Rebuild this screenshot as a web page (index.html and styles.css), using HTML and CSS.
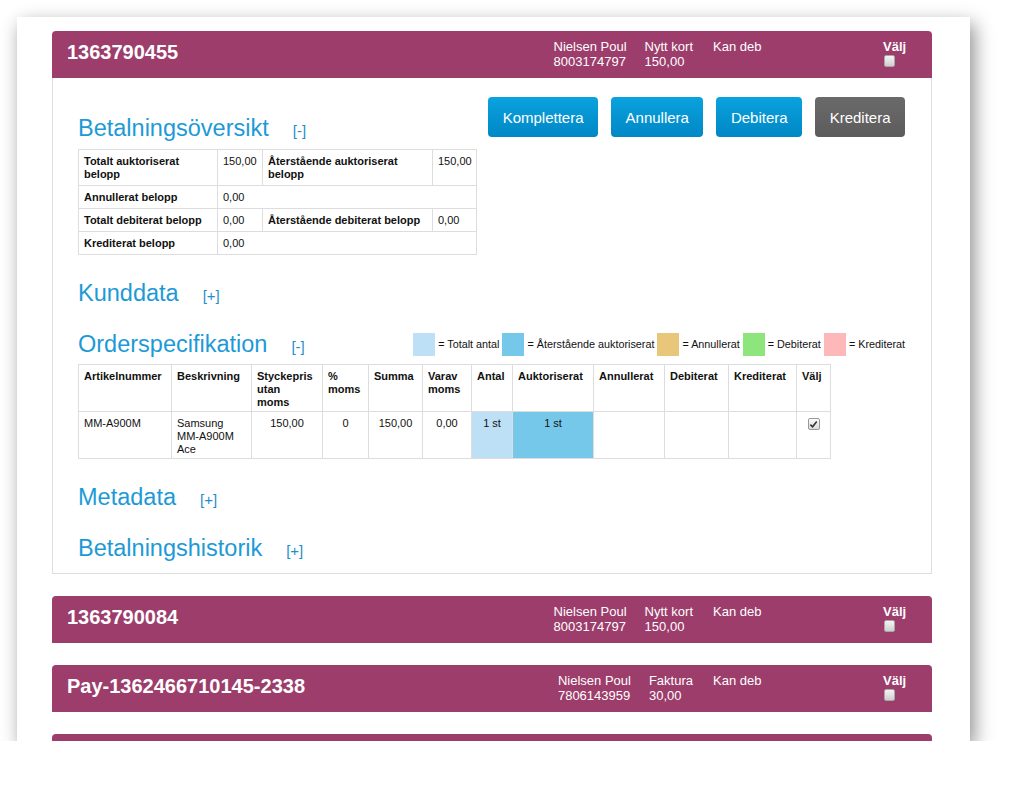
FILE: index.html
```html
<!DOCTYPE html>
<html lang="sv">
<head>
<meta charset="utf-8">
<title>Betalningar</title>
<link rel="stylesheet" href="styles.css">
</head>
<body>
<div class="frame">

  <div class="panel">
    <div class="panel-head">
      <div class="order-id">1363790455</div>
      <div class="info info-name"><div>Nielsen Poul</div><div>8003174797</div></div>
      <div class="info"><div>Nytt kort</div><div>150,00</div></div>
      <div class="status">Kan deb</div>
      <div class="select"><div class="select-label">Välj</div><span class="cb"></span></div>
    </div>
    <div class="panel-body">
      <section class="section">
        <div class="row row-top">
          <h2 class="heading heading-first">Betalningsöversikt<span class="toggle">[-]</span></h2>
          <div class="actions">
            <button class="btn btn-blue">Komplettera</button>
            <button class="btn btn-blue">Annullera</button>
            <button class="btn btn-blue">Debitera</button>
            <button class="btn btn-gray">Kreditera</button>
          </div>
        </div>
        <table class="summary">
          <colgroup><col class="c1"><col class="c2"><col class="c3"><col class="c4"></colgroup>
          <tr><th>Totalt auktoriserat belopp</th><td>150,00</td><th>Återstående auktoriserat belopp</th><td>150,00</td></tr>
          <tr><th>Annullerat belopp</th><td colspan="3">0,00</td></tr>
          <tr><th>Totalt debiterat belopp</th><td>0,00</td><th>Återstående debiterat belopp</th><td>0,00</td></tr>
          <tr><th>Krediterat belopp</th><td colspan="3">0,00</td></tr>
        </table>
      </section>

      <section class="section">
        <div class="row"><h2 class="heading">Kunddata<span class="toggle">[+]</span></h2></div>
      </section>

      <section class="section">
        <div class="row row-center">
          <h2 class="heading">Orderspecifikation<span class="toggle">[-]</span></h2>
          <div class="legend">
            <span class="sw sw-total"></span><span class="lg">= Totalt antal</span>
            <span class="sw sw-rest"></span><span class="lg">= Återstående auktoriserat</span>
            <span class="sw sw-ann"></span><span class="lg">= Annullerat</span>
            <span class="sw sw-deb"></span><span class="lg">= Debiterat</span>
            <span class="sw sw-kre"></span><span class="lg last">= Krediterat</span>
          </div>
        </div>
        <table class="order">
          <colgroup>
            <col class="o1"><col class="o2"><col class="o3"><col class="o4"><col class="o5"><col class="o6">
            <col class="o7"><col class="o8"><col class="o9"><col class="o10"><col class="o11"><col class="o12">
          </colgroup>
          <tr>
            <th>Artikelnummer</th><th>Beskrivning</th><th>Styckepris utan moms</th><th>% moms</th><th>Summa</th><th>Varav moms</th>
            <th>Antal</th><th>Auktoriserat</th><th>Annullerat</th><th>Debiterat</th><th>Krediterat</th><th>Välj</th>
          </tr>
          <tr>
            <td>MM-A900M</td><td>Samsung MM-A900M Ace</td><td class="num">150,00</td><td class="num">0</td><td class="num">150,00</td><td class="num">0,00</td>
            <td class="num bg-total">1 st</td><td class="num bg-rest">1 st</td><td></td><td></td><td></td>
            <td class="num"><span class="cb cb-checked"><svg viewBox="0 0 10 10" width="9" height="9"><path d="M1.5 5.2 L4 7.6 L8.6 1.8" fill="none" stroke="#333" stroke-width="1.8"/></svg></span></td>
          </tr>
        </table>
      </section>

      <section class="section">
        <div class="row"><h2 class="heading">Metadata<span class="toggle">[+]</span></h2></div>
      </section>

      <section class="section">
        <div class="row"><h2 class="heading">Betalningshistorik<span class="toggle">[+]</span></h2></div>
      </section>
    </div>
  </div>

  <div class="panel">
    <div class="panel-head">
      <div class="order-id">1363790084</div>
      <div class="info info-name"><div>Nielsen Poul</div><div>8003174797</div></div>
      <div class="info"><div>Nytt kort</div><div>150,00</div></div>
      <div class="status">Kan deb</div>
      <div class="select"><div class="select-label">Välj</div><span class="cb"></span></div>
    </div>
  </div>

  <div class="panel">
    <div class="panel-head">
      <div class="order-id">Pay-1362466710145-2338</div>
      <div class="info info-name"><div>Nielsen Poul</div><div>7806143959</div></div>
      <div class="info"><div>Faktura</div><div>30,00</div></div>
      <div class="status">Kan deb</div>
      <div class="select"><div class="select-label">Välj</div><span class="cb"></span></div>
    </div>
  </div>

  <div class="panel">
    <div class="panel-head">
      <div class="order-id">&nbsp;</div>
    </div>
  </div>

</div>
</body>
</html>
```

FILE: styles.css
```css
html, body {
  margin: 0;
  padding: 0;
  background: #ffffff;
}

body {
  font-family: "Liberation Sans", Arial, sans-serif;
  color: #111;
}

.frame {
  margin: 17px 0 0 17px;
  width: 953px;
  height: 724px;
  box-sizing: border-box;
  padding: 14px 38px 0 35px;
  overflow: hidden;
  background: #fff;
  box-shadow: 4px 7px 18px rgba(0, 0, 0, 0.45);
}

.panel {
  margin-bottom: 22px;
}

.panel-head {
  display: flex;
  align-items: flex-start;
  height: 47px;
  box-sizing: border-box;
  padding: 8px 0 0 15px;
  background: #9c3d6b;
  color: #fff;
  border-radius: 4px 4px 0 0;
}

.order-id {
  flex: 1;
  font-size: 20px;
  font-weight: bold;
  line-height: 24px;
  margin-top: 1px;
}

.info {
  font-size: 13px;
  line-height: 15px;
  padding-right: 20px;
  white-space: nowrap;
}

.info-name {
  padding-right: 18px;
}

.status {
  width: 170px;
  font-size: 13px;
  line-height: 15px;
}

.select {
  width: 49px;
  font-size: 13px;
  line-height: 15px;
}

.select-label {
  font-weight: bold;
}

.cb {
  display: block;
  width: 9px;
  height: 10px;
  margin: 1px 0 0 1px;
  border: 1px solid #a8a8a8;
  border-radius: 2px;
  background: linear-gradient(#f4f4f4, #cfcfcf);
}

.cb-checked {
  display: inline-flex;
  align-items: center;
  justify-content: center;
  width: 10px;
  height: 10px;
  margin: 1px 0 0 0;
  border-color: #999;
  background: linear-gradient(#fafafa, #dcdcdc);
}

.panel-body {
  border: 1px solid #dddddd;
  border-top: none;
  padding: 19px 26px 12px 25px;
}

.section + .section {
  margin-top: 25px;
}

.row {
  display: flex;
  justify-content: space-between;
  align-items: flex-start;
}

.row-center {
  align-items: center;
}

.heading {
  margin: 0;
  height: 26px;
  font-size: 23.5px;
  line-height: 26px;
  font-weight: normal;
  color: #1d9ad6;
  white-space: nowrap;
}

.heading-first {
  margin-top: 18px;
}

.toggle {
  font-size: 15px;
  line-height: 1;
  margin-left: 24px;
  color: #1f8fca;
}

.actions {
  display: flex;
  gap: 13px;
}

.btn {
  height: 40px;
  padding: 0 14.5px;
  border: none;
  border-radius: 4px;
  font-family: "Liberation Sans", Arial, sans-serif;
  font-size: 15px;
  color: #fff;
  cursor: pointer;
}

.btn-blue {
  background: linear-gradient(#0aa2dd, #0087c6);
}

.btn-gray {
  background: linear-gradient(#6a6a6a, #5c5c5c);
}

table {
  border-collapse: collapse;
  table-layout: fixed;
  font-size: 11px;
  line-height: 13px;
  color: #111;
}

.summary {
  margin-top: 8px;
  width: 398px;
}

.summary col.c1 { width: 139px; }
.summary col.c2 { width: 45px; }
.summary col.c3 { width: 170px; }
.summary col.c4 { width: 44px; }

.summary th,
.summary td {
  border: 1px solid #dddddd;
  padding: 5px 5px 4px 5px;
  text-align: left;
  vertical-align: top;
}

.summary th {
  font-weight: bold;
}

.order {
  margin-top: 7px;
  width: 752px;
}

.order col.o1 { width: 93px; }
.order col.o2 { width: 80px; }
.order col.o3 { width: 71px; }
.order col.o4 { width: 46px; }
.order col.o5 { width: 54px; }
.order col.o6 { width: 49px; }
.order col.o7 { width: 41px; }
.order col.o8 { width: 81px; }
.order col.o9 { width: 71px; }
.order col.o10 { width: 64px; }
.order col.o11 { width: 68px; }
.order col.o12 { width: 34px; }

.order th,
.order td {
  border: 1px solid #dddddd;
  padding: 5px 8px 2px 5px;
  height: 39px;
  text-align: left;
  vertical-align: top;
}

.order th {
  font-weight: bold;
}

.order td.num {
  text-align: center;
  padding-right: 5px;
}

.bg-total {
  background: #bde0f7;
}

.bg-rest {
  background: #76c8ea;
}

.legend {
  display: flex;
  align-items: center;
  font-size: 10.8px;
  color: #111;
}

.sw {
  width: 22px;
  height: 23px;
  margin-right: 3px;
}

.lg {
  margin-right: 3px;
  white-space: nowrap;
}

.lg.last {
  margin-right: 0;
}

.sw-total { background: #bde0f7; }
.sw-rest { background: #76c8ea; }
.sw-ann { background: #e8c67a; }
.sw-deb { background: #8ee57b; }
.sw-kre { background: #fdb9b9; }
```
